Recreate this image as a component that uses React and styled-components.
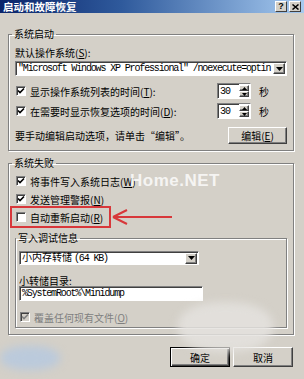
import React from "react"
import styled, { createGlobalStyle } from "styled-components"

const CJK = `"Noto Sans CJK SC", "Liberation Sans", sans-serif`
const MONO = `"Liberation Mono", "Noto Sans CJK SC", monospace`

const GlobalStyle = createGlobalStyle`
  html, body { margin: 0; padding: 0; }
  body {
    width: 304px;
    height: 379px;
    overflow: hidden;
    background: #d4d0c8;
    font-family: ${CJK};
    font-size: 10px;
    color: #000;
  }
`

// Window frame
const Window = styled.div`
  position: relative;
  width: 304px;
  height: 379px;
  display: flex;
  flex-direction: column;
  background: #d4d0c8;
  overflow: hidden;
`
const TitleBar = styled.div`
  height: 13px;
  display: flex;
  align-items: center;
  padding: 0 3px;
  background: linear-gradient(to right, #0a246a 0%, #2f5a9c 40%, #a6caf0 100%);
`
const Title = styled.div`
  flex: 1;
  color: #fff;
  font-weight: bold;
  font-size: 10.5px;
  line-height: 13px;
`
const CaptionButton = styled.div`
  width: 12px;
  height: 11px;
  margin-left: 2px;
  box-sizing: border-box;
  background: #d4d0c8;
  border: 1px solid;
  border-color: #fff #404040 #404040 #fff;
  display: flex;
  align-items: center;
  justify-content: center;
  font: bold 9px "Liberation Sans", sans-serif;
  line-height: 9px;
`
const Body = styled.div`
  flex: 1;
  display: flex;
  flex-direction: column;
  padding: 15px 10px 0 8px;
`

// Group boxes
const Group = styled.fieldset`
  margin: ${p => p.$top || 0}px 0 0 0;
  padding: ${p => p.$pad};
  border: 1px solid #808080;
  box-shadow: inset 1px 1px 0 #fff, 1px 1px 0 #fff;
  min-width: 0;
  display: flex;
  flex-direction: column;
`
const Legend = styled.legend`
  padding: 0 2px;
  margin-left: -3px;
  font-size: 10px;
  line-height: 12px;
`
const Label = styled.div`
  height: ${p => p.$h || 12}px;
  line-height: ${p => p.$h || 12}px;
  margin-top: ${p => p.$mt || 0}px;
  white-space: nowrap;
`
const Row = styled.div`
  position: relative;
  display: flex;
  align-items: center;
  height: ${p => p.$h || 12}px;
  margin-top: ${p => p.$mt || 0}px;
  white-space: nowrap;
  color: ${p => (p.$disabled ? "#808080" : "#000")};
`
const Highlight = styled(Row)`
  align-self: flex-start;
  padding-right: 3px;
  outline: 2px solid #d8373a;
  outline-offset: 3px;
`
const Arrow = styled.svg`
  position: absolute;
  left: 97px;
  top: -3px;
`

// Controls
const Box = styled.span`
  width: 10px;
  height: 10px;
  box-sizing: border-box;
  margin: 0 4px 0 1px;
  flex: none;
  background: ${p => (p.$disabled ? "#d4d0c8" : "#fff")};
  border: 1px solid;
  border-color: #808080 #fff #fff #808080;
  box-shadow: inset 1px 1px 0 #404040;
  display: flex;
  align-items: center;
  justify-content: center;
`
const Field = styled.div`
  height: ${p => p.$h}px;
  width: ${p => (p.$w ? `${p.$w}px` : "auto")};
  margin-top: ${p => p.$mt || 0}px;
  box-sizing: border-box;
  background: #fff;
  border: 1px solid;
  border-color: #808080 #fff #fff #808080;
  box-shadow: inset 1px 1px 0 #404040;
  display: flex;
  align-items: center;
  padding: 0 1px 0 2px;
`
const FieldText = styled.span`
  flex: 1;
  font-family: ${MONO};
  font-size: 10px;
  letter-spacing: -1.15px;
  white-space: nowrap;
  line-height: 12px;
`
const Wide = styled.span`
  font-family: ${CJK};
  letter-spacing: 0;
  margin-right: 2px;
`
const Raised = styled.span`
  box-sizing: border-box;
  background: #d4d0c8;
  border: 1px solid;
  border-color: #fff #404040 #404040 #fff;
  box-shadow: inset -1px -1px 0 #808080;
  display: flex;
  align-items: center;
  justify-content: center;
`
const DropButton = styled(Raised)`
  width: 12px;
  height: 11px;
  flex: none;
`
const Spin = styled.div`
  margin-left: auto;
  display: flex;
  height: 16px;
`
const SpinText = styled(Field)`
  font-family: ${MONO};
  font-size: 10px;
  letter-spacing: -1px;
  border-right: none;
`
const SpinButtons = styled.div`
  width: 12px;
  display: flex;
  flex-direction: column;
  background: #fff;
  padding: 1px 1px 1px 0;
  box-sizing: border-box;
  border: 1px solid;
  border-color: #808080 #fff #fff transparent;
  border-left: none;
`
const SpinButton = styled(Raised)`
  flex: 1;
`
const Unit = styled.span`
  width: 36px;
  padding-left: 8px;
  box-sizing: border-box;
`
const Button = styled.button`
  width: ${p => p.$w}px;
  height: ${p => p.$h}px;
  margin-left: ${p => p.$ml || 0}px;
  padding: 0;
  box-sizing: border-box;
  background: #d4d0c8;
  font-family: ${CJK};
  font-size: 10px;
  color: #000;
  border: 1px solid;
  border-color: ${p => (p.$default ? "#000" : "#fff #404040 #404040 #fff")};
  box-shadow: ${p =>
    p.$default
      ? "inset 1px 1px 0 #fff, inset -1px -1px 0 #404040, inset -2px -2px 0 #808080"
      : "inset -1px -1px 0 #808080"};
`
const EditRow = styled.div`
  display: flex;
  align-items: center;
  justify-content: space-between;
  margin-top: 8px;
  height: 17px;
`
const Footer = styled.div`
  display: flex;
  justify-content: flex-end;
  margin-top: 12px;
  padding-right: 1px;
`

// Watermark overlays of the screenshot
const Watermark = styled.div`
  position: absolute;
  left: 130px;
  top: 171px;
  color: rgba(255, 255, 255, 0.8);
  font: bold 17px "Liberation Sans", sans-serif;
  letter-spacing: 0.5px;
  pointer-events: none;
`
const Mosaic = styled.div`
  position: absolute;
  left: ${p => p.$x}px;
  top: ${p => p.$y}px;
  width: ${p => p.$w}px;
  height: ${p => p.$h}px;
  background: ${p => p.$c};
  border-radius: 45%;
  filter: blur(4px);
  pointer-events: none;
`

const Tick = ({ color = "#000" }) => (
  <svg width="8" height="8" viewBox="0 0 8 8">
    <polyline points="1,3.5 3,5.5 7,1.5" fill="none" stroke={color} strokeWidth="1.6" />
  </svg>
)

const Down = () => (
  <svg width="7" height="4" viewBox="0 0 7 4">
    <polygon points="0,0 7,0 3.5,4" fill="#000" />
  </svg>
)

const Up = () => (
  <svg width="5" height="3" viewBox="0 0 5 3">
    <polygon points="0,3 5,3 2.5,0" fill="#000" />
  </svg>
)

const SmallDown = () => (
  <svg width="5" height="3" viewBox="0 0 5 3">
    <polygon points="0,0 5,0 2.5,3" fill="#000" />
  </svg>
)

const Check = ({ checked, disabled, children }) => (
  <>
    <Box $disabled={disabled}>{checked && <Tick color={disabled ? "#808080" : "#000"} />}</Box>
    {children}
  </>
)

const Select = ({ w, h, mt, children }) => (
  <Field $w={w} $h={h} $mt={mt}>
    <FieldText>{children}</FieldText>
    <DropButton>
      <Down />
    </DropButton>
  </Field>
)

const SpinBox = ({ value }) => (
  <Spin>
    <SpinText $w={22} $h={16}>{value}</SpinText>
    <SpinButtons>
      <SpinButton><Up /></SpinButton>
      <SpinButton><SmallDown /></SpinButton>
    </SpinButtons>
  </Spin>
)

const App = () => {
  return (
    <Window>
      <GlobalStyle />
      <TitleBar>
        <Title>启动和故障恢复</Title>
        <CaptionButton>?</CaptionButton>
        <CaptionButton>
          <svg width="7" height="6" viewBox="0 0 7 6">
            <path d="M0.5 0.5 L6.5 5.5 M6.5 0.5 L0.5 5.5" stroke="#000" strokeWidth="1.5" />
          </svg>
        </CaptionButton>
      </TitleBar>

      <Body>
        <Group $pad="7px 6px 6px 6px">
          <Legend>系统启动</Legend>
          <Label>默认操作系统(<u>S</u>):</Label>
          <Select h={15} mt={2}>"Microsoft Windows XP Professional" /noexecute=optin</Select>
          <Row $h={16} $mt={7}>
            <Check checked>显示操作系统列表的时间(<u>T</u>):</Check>
            <SpinBox value="30" />
            <Unit>秒</Unit>
          </Row>
          <Row $h={16} $mt={4}>
            <Check checked>在需要时显示恢复选项的时间(<u>D</u>):</Check>
            <SpinBox value="30" />
            <Unit>秒</Unit>
          </Row>
          <EditRow>
            <span>要手动编辑启动选项，请单击“编辑”。</span>
            <Button $w={59} $h={17}>编辑(<u>E</u>)</Button>
          </EditRow>
        </Group>

        <Group $top={6} $pad="6px 6px 6px 6px">
          <Legend>系统失败</Legend>
          <Row>
            <Check checked>将事件写入系统日志(<u>W</u>)</Check>
          </Row>
          <Row $mt={6}>
            <Check checked>发送管理警报(<u>N</u>)</Check>
          </Row>
          <Highlight $mt={6}>
            <Check>自动重新启动(<u>R</u>)</Check>
            <Arrow width="62" height="18" viewBox="0 0 62 18">
              <path d="M1 9 L60 9 M1 9 L15 2 M1 9 L15 16" stroke="#d8373a" strokeWidth="2" fill="none" />
            </Arrow>
          </Highlight>

          <Group $top={9} $pad="7px 5px 4px 3px">
            <Legend>写入调试信息</Legend>
            <Select w={180} h={14}><Wide>小内存转储</Wide>(64 KB)</Select>
            <Label $mt={10} $h={11}>小转储目录:</Label>
            <Field $w={184} $h={15}>
              <FieldText>%SystemRoot%\Minidump</FieldText>
            </Field>
            <Row $mt={10} $disabled>
              <Check checked disabled>覆盖任何现有文件(<u>O</u>)</Check>
            </Row>
          </Group>
        </Group>

        <Footer>
          <Button $w={60} $h={20} $default>确定</Button>
          <Button $w={60} $h={20} $ml={3}>取消</Button>
        </Footer>
      </Body>

      <Watermark>Home.NET</Watermark>
      <Mosaic $x={178} $y={302} $w={95} $h={50} $c="rgba(228, 226, 222, 0.85)" />
      <Mosaic $x={0} $y={346} $w={60} $h={24} $c="rgba(176, 200, 228, 0.7)" />
    </Window>
  )
}

export default App
